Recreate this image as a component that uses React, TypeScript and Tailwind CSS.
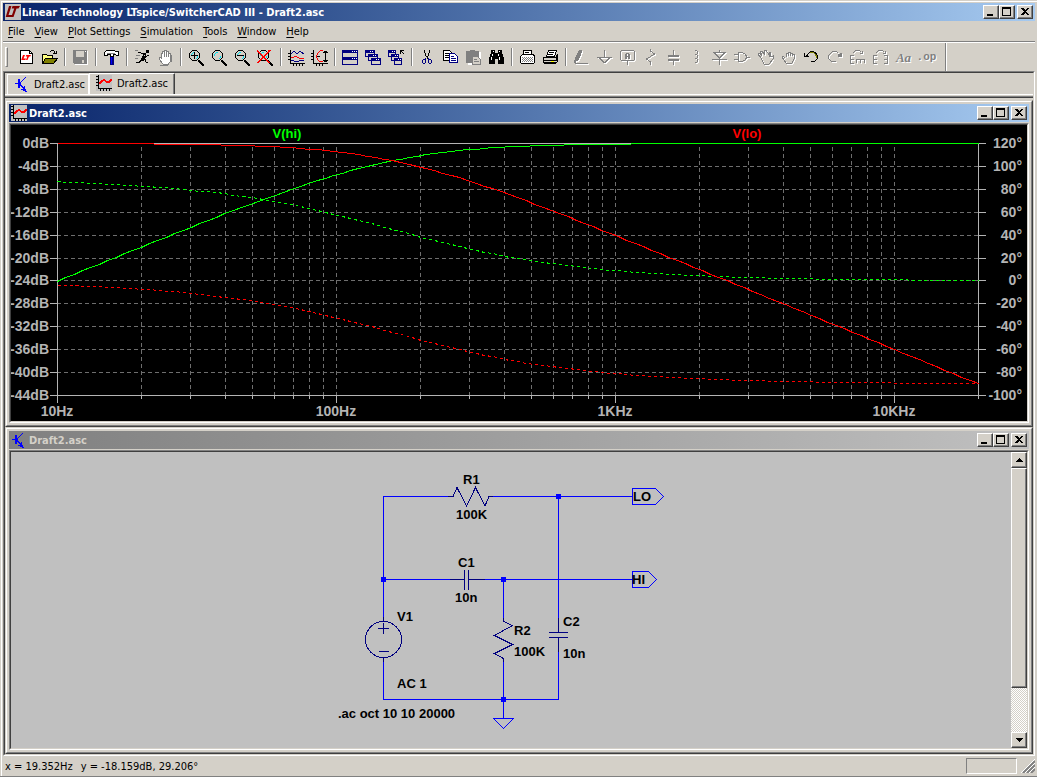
import React from "react";

type Kids = { children?: React.ReactNode };

const raised =
  "border border-t-white border-l-white border-r-[#404040] border-b-[#404040] bg-[#d4d0c8] shadow-[inset_-1px_-1px_0_#808080]";

/* ---------- icon helpers ---------- */

function Icon({ children }: Kids) {
  return (
    <svg className="shrink-0" width="17" height="17" viewBox="0 0 17 17" fill="none" stroke="currentColor" strokeWidth="1" shapeRendering="crispEdges" aria-hidden="true">
      {children}
    </svg>
  );
}

function Etched({ children }: Kids) {
  return (
    <Icon>
      <g transform="translate(1 1)" className="text-white">{children}</g>
      <g className="text-[#808080]">{children}</g>
    </Icon>
  );
}

function Lens({ children }: Kids) {
  return (
    <Icon>
      <path d="M4 1.5h5M3 2.5h1M9 2.5h1M2 3.5h1M10 3.5h1M1.5 4v5M11.5 4v5M2 9.5h1M10 9.5h1M3 10.5h1M9 10.5h1M4 11.5h5" stroke="#000" />
      <path d="M3.5 5v2M4 4.5h1M5 3.500h2M8 9.5h1M9.500 7v2" stroke="#00e0f0" />
      <path d="M10 11h2v1h1v1h1v1h1v1h1v2h-2v-1h-1v-1h-1v-1h-1v-1h-1z" fill="#000" stroke="none" />
      {children}
    </Icon>
  );
}

function TransistorIcon() {
  return (
    <Icon>
      <path d="M1 7h3V3h2v3h1V5h1V4h1V3h1V2h1V1h1v1h-1v1h-1v1H9v1H8v1H7v3h1v1h1v1h1v-1h1v3h1v2h1v1h-2v-1H9v-1H7v-1h2v-1H8v-1H7v-1H6v2H4V8H1z" fill="#0000ff" stroke="none" />
    </Icon>
  );
}

function WaveIcon() {
  return (
    <Icon>
      <path d="M0 0h16v16H0z" fill="#c0c0c0" stroke="none" />
      <path d="M2.5 0v14M2 13.500h14" stroke="#000" />
      <path d="M0 1.500h2M0 4.500h2M0 7.500h2M0 10.500h2M4.500 14v2M7.500 14v2M10.500 14v2M13.500 14v2" stroke="#000" />
      <path d="M3 7h1V6h1V5h2V4h2v1h1v1h3V5h1V4h2v2h-1v1h-1v1h-4V7H9V6H7v1H6v1H5v1H3z" fill="#ff0000" stroke="none" />
    </Icon>
  );
}

function AppIcon() {
  return (
    <svg className="shrink-0" width="16" height="16" viewBox="0 0 16 16" aria-hidden="true">
      <path d="M0 0h16v16H0z" fill="#c0c0c0" />
      <path d="M4 2h2.500L3.500 11H7l-.7 2H.7zM7.500 2H15l-1.500 2.500h-2L8.500 13H6.300L9.200 4.500H6.700z" fill="#800000" />
    </svg>
  );
}

const icons: Record<string, React.ReactNode> = {
  New: (
    <Icon>
      <path d="M2.5 1.5h9l3 3v10h-12z" fill="#fff" stroke="#000" />
      <path d="M11.5 1.5v3h3" stroke="#000" />
      <path d="M5 6h2L5.500 9.500H8l-.7 1.500H3.200zM8.300 6H13l-.8 1.500H11L9.500 11H8l1.300-3.500H7.700z" fill="#ff0000" stroke="none" shapeRendering="auto" />
    </Icon>
  ),
  Open: (
    <Icon>
      <path d="M1.5 14.5v-9h4l1 1h5v3" fill="#ffff80" stroke="#000" />
      <path d="M1.5 14.5l3-5h12l-4 5z" fill="#808000" stroke="#000" />
      <path d="M9 2.5h1M10 1.5h3M13.5 2v2M15.5 2v3M12 4.5h4" stroke="#000" />
    </Icon>
  ),
  Save: (
    <Icon>
      <path d="M2 2h14v14H3z" fill="#fff" stroke="none" />
      <path d="M1 1h14v14H2l-1-1z" fill="#808080" stroke="none" />
      <path d="M4 2h8v6H4zM10 11h2v3h-2z" fill="#d4d0c8" stroke="none" />
      <path d="M13 2.5h1" stroke="#fff" />
    </Icon>
  ),
  "Control Panel": (
    <Icon>
      <path d="M3.500 1.500h8l1 1h3v4h-2l-1-1h-2v2h-3v-2h-3v1h-3v-3z" fill="#fff" stroke="#000" />
      <path d="M4 4.500h8" stroke="#808080" />
      <path d="M7 8h4v8H7z" fill="#000080" stroke="none" />
      <path d="M8.500 8v7" stroke="#0000ff" />
    </Icon>
  ),
  Run: (
    <Icon>
      <path d="M12 1h3v3h-3z" fill="#000" stroke="none" />
      <path d="M4 3.500h3M7 4.500h5M9 5h2v3H9zM8 7h2v3H8zM11 7.500h2M13 6.500h2M7 9h2v2H7zM10 10.500h2M11.500 10v3M12 13.500h2M6 11.500h2M5 12.500h2M2 13.500h4" stroke="#000" />
      <path d="M1 1.500h3M2 6.500h4M1 9.500h3" stroke="#808080" />
    </Icon>
  ),
  Halt: (
    <Icon>
      <path d="M4.5 9V4h1V2h2V1h2v1h2v2h2v8l-2 3H6l-4-5V8h1z" fill="#fff" stroke="#808080" />
      <path d="M7.5 3v5M9.5 3v5M11.5 4v4M3 16.5h8M14.500 6v7" stroke="#808080" />
    </Icon>
  ),
  "Zoom In": <Lens><path d="M3 6.500h7M6.500 3v7" stroke="#000" /></Lens>,
  "Zoom Back": <Lens />,
  "Zoom Out": <Lens><path d="M3 6.500h7" stroke="#000" /></Lens>,
  "Zoom Extents": <Lens><path d="M0 1l12 13M13 1L1 14" stroke="#ff0000" strokeWidth="1.500" /></Lens>,
  "Add Trace": (
    <Icon>
      <path d="M2.5 1v14M2 14.5h15M0 4.500h2M0 7.500h2M0 10.500h2M5.500 15v2M8.500 15v2M11.500 15v2M14.500 15v2" stroke="#000" />
      <path d="M3 5l3-3 3 3 3-3 4 3M3 11.500h3M6 12.500h5M11 11.500h5" stroke="#000080" />
      <path d="M3 8.500h3M6 7.500h3M9 8.500h2M11 9.500h5" stroke="#ff0000" />
    </Icon>
  ),
  Autorange: (
    <Icon>
      <path d="M2.5 1v14M2 14.500h15M0 4.500h2M0 7.500h2M0 10.500h2M5.500 15v2M8.500 15v2M11.500 15v2M14.500 2v11M6 7.500h3" stroke="#000" />
      <path d="M12 3.500h5M12 11.500h5M13 2.500h3M13 12.500h3" stroke="#000" />
      <path d="M12 1.500H9M8 2.500h1M7 3.500h1M6.500 4v2M5.500 6v3M6.500 9v2M7 11.500h1M8 12.500h4" stroke="#ff0000" />
    </Icon>
  ),
  Tile: (
    <Icon>
      <path d="M.5 1.500h15v7H.5zM.5 8.500h15v7H.5z" fill="#d4d0c8" stroke="#000080" />
      <path d="M0 1h16v3H0zM0 8h16v3H0z" fill="#000080" stroke="none" />
      <path d="M10 2.500h1M12 2.500h1M14 2.500h1M10 9.500h1M12 9.500h1M14 9.500h1" stroke="#fff" />
    </Icon>
  ),
  Cascade: (
    <Icon>
      {[[0, 1], [3, 5], [6, 9]].map(([x, y]) => (
        <g key={x}>
          <path d={`M${x + 0.5} ${y + 0.5}h9v6h-9z`} fill="#d4d0c8" stroke="#000080" />
          <path d={`M${x} ${y}h10v3h-10z`} fill="#000080" stroke="none" />
          <path d={`M${x + 5} ${y + 1.5}h1m1 0h1`} stroke="#fff" />
        </g>
      ))}
    </Icon>
  ),
  "Close All": (
    <Icon>
      {[[0, 1], [3, 5], [6, 9]].map(([x, y]) => (
        <g key={x}>
          <path d={`M${x + 0.5} ${y + 0.5}h7v6h-7z`} fill="#d4d0c8" stroke="#000080" />
          <path d={`M${x} ${y}h8v3h-8z`} fill="#000080" stroke="none" />
          <path d={`M${x + 4} ${y + 1.5}h1m1 0h1`} stroke="#fff" />
        </g>
      ))}
      <path d="M12 1.500h4M12.500 1v4M13 2.500h1M14 3.500h1M15 4.500h1" stroke="#000" />
    </Icon>
  ),
  Cut: (
    <Icon>
      <path d="M5.500 1v3M6.500 4v3M10.500 1v3M9.500 4v3M7 7.500h2M8 7v3" stroke="#000" />
      <path d="M6 9.500h1M9 9.500h1M4 10.500h2M10 10.500h2M3.500 11v3M6.500 10v4M4 14.500h2M9.500 10v4M12.500 11v3M10 14.500h2" stroke="#000080" />
    </Icon>
  ),
  Copy: (
    <Icon>
      <path d="M1.500 1.500h6l2 2v8h-8z" fill="#fff" stroke="#000" />
      <path d="M3 4.500h4M3 6.500h4M3 8.500h4" stroke="#000" />
      <path d="M7.500 4.500h5l3 3v6h-8z" fill="#fff" stroke="#000080" />
      <path d="M9 7.500h3M9 9.500h5M9 11.500h5" stroke="#000080" />
    </Icon>
  ),
  Paste: (
    <Icon>
      <path d="M2 3h14v13H3z" fill="#fff" stroke="none" />
      <path d="M1 2h4V1h5v1h4v12H1z" fill="#808080" stroke="none" />
      <path d="M7.500 7.500h5l3 3v5h-8z" fill="#d4d0c8" stroke="#808080" />
      <path d="M9 10.500h3M9 12.500h5" stroke="#808080" />
    </Icon>
  ),
  Find: (
    <Icon>
      <path d="M3 1h4v3h3V1h4v3l2 5v6h-6v-5H7v5H1V9l2-5z" fill="#000" stroke="none" />
      <path d="M4.500 5v2M3.500 8v3M10.500 5v2M11.500 8v3M5 2.500h1M11 2.500h1" stroke="#fff" />
    </Icon>
  ),
  "Print Preview": (
    <Icon>
      <path d="M4.500 5.500v-4h8v4h2l1 2v6l-1 1h-12l-1-1v-6l2-2z" fill="#fff" stroke="#000" />
      <path d="M3 8.500h11M3 10.500h11M3 12.500h11" stroke="#808080" strokeDasharray="1 1" />
      <path d="M3 9.500h11M3 11.500h11" stroke="#808080" strokeDasharray="1 1" strokeDashoffset="1" />
      <path d="M6 3.500h4M4 5.500h9" stroke="#000" />
    </Icon>
  ),
  Print: (
    <Icon>
      <path d="M4.500 7.500l2-6h8l-2 6z" fill="#fff" stroke="#000" />
      <path d="M7 3.500h5M6 5.500h5" stroke="#000" />
      <path d="M1.500 8.500h12l2-3v7l-2 2h-11l-1-1z" fill="#d4d0c8" stroke="#000" />
      <path d="M2 11.500h12M2 13.500h12M14.500 7v5M2 8.500h12" stroke="#000" />
      <path d="M9 12.500h3" stroke="#ffff00" />
    </Icon>
  ),
  Wire: (
    <Etched>
      <path d="M6 1h3v3H8v3H7v2H6v2H5v1H3v2H1v-3h1V8h1V6h1V4h1V2h1z" fill="currentColor" stroke="none" />
      <path d="M2 14.500h13" />
    </Etched>
  ),
  Ground: <Etched><path d="M8.500 1v7M1 8.500h15M3 9.500h2M4 10.500h2M5 11.500h2M6 12.500h2M7 13.500h3M9 12.500h2M10 11.500h2M11 10.500h2M12 9.500h2" /></Etched>,
  "Label Net": (
    <Etched>
      <path d="M2 1.500h13M1.500 2v9M15.500 2v9M2 11.500h13M8.500 12v4" />
      <path d="M6 10V5h1V4h3v1h1v5H9V8H8v2zM8 5v2h1V5z" fill="currentColor" fillRule="evenodd" stroke="none" />
    </Etched>
  ),
  Resistor: <Etched><path d="M8.500 0v2l4 3-8 5 4 3v3" /></Etched>,
  Capacitor: <Etched><path d="M8.500 1v5M8.500 11v5" /><path d="M3 7h11M3 11h11" strokeWidth="2" /></Etched>,
  Inductor: <Etched><path d="M7 1.500h2M9.500 2v3M7 5.500h2M9.500 6v3M7 9.500h2M9.500 10v3M7 13.500h2" /></Etched>,
  Diode: <Etched><path d="M8.500 1v3M2 3.500h13M3 4.500h2M4 5.500h2M5 6.500h2M6 7.500h2M7 8.500h3M9 7.500h2M10 6.500h2M11 5.500h2M12 4.500h2M1 10.500h15M8.500 9v7" /></Etched>,
  Component: <Etched><path d="M4.500 3v10M4 3.500h5M4 12.500h5M9 4.500h2M9 11.500h2M11.500 5v2M11.500 9v2M12.500 6v4M0 5.500h4M0 10.500h4M13 8h3" /></Etched>,
  Move: <Etched><path d="M4 9L1 5l1-1 3 3-2-5h2l3 4-1-5h2l3 5V3h1l1 5 2-1v3l-4 5H7z" /></Etched>,
  Drag: <Etched><path d="M5 9L3 7 2 8l4 6h6l2-4V5h-2V4h-2V3H8v1H6v4M8.500 4v3M10.500 4v3M12.500 5v2" /></Etched>,
  Undo: (
    <Icon>
      <path d="M1 4h1v3h1V6h1V5h1V4h1V3h1v1H6v1H5v2h1v1H1z" fill="#000" stroke="none" />
      <path d="M11 3.500h1M12 4.500h1M13.500 5v1M14.500 6v4M13.500 10v1M12.500 11v1M8 12.500h4" stroke="#000" />
      <path d="M7 2.500h4M12 3.500h1M13 4.500h1" stroke="#000" />
      <path d="M7 3.500h4M11 4.500h1M12.500 5v2M13.500 6v3" stroke="#808000" />
    </Icon>
  ),
  Redo: <Etched><path d="M15 4h-1v3h-2v1h4V4zM12 5h2v2h-2z" fill="currentColor" stroke="none" /><path d="M6 2.500h5M5 3.500h1M4 4.500h1M3 5.500h1M2.500 6v4M3.500 10v1M4 11.500h1M5 12.500h5M11 3.500h1" /></Etched>,
  Rotate: <Etched><path d="M1.500 6v9M2 6.500h3M2 10.500h3M2 14.500h3M7 10.500h9M7.500 11v3M11.500 11v3M15.500 11v3M4 3.500h1M5 2.500h1M6 1.500h5M11 2.500h1M13.500 2v3M11 4.500h3" /></Etched>,
  Mirror: <Etched><path d="M1.500 6v9M2 6.500h3M2 10.500h3M2 14.500h3M15.500 6v9M12 6.500h3M12 10.500h3M12 14.500h3M4 3.500h1M5 2.500h1M6 1.500h5M11 2.500h1M13.500 2v3M11 4.500h3" /></Etched>,
};

function LetterIcon({ text, italic }: { text: string; italic?: boolean }) {
  return (
    <span
      className={
        "text-[#808080] [text-shadow:1px_1px_0_white] leading-none " +
        (italic ? "font-['Liberation_Serif',serif] italic font-bold text-[13px]" : "font-['Liberation_Mono',monospace] font-bold text-[11px]")
      }
    >
      {text}
    </span>
  );
}

const toolbar: string[][] = [
  ["New", "Open"],
  ["Save"],
  ["Control Panel"],
  ["Run", "Halt"],
  ["Zoom In", "Zoom Back", "Zoom Out", "Zoom Extents"],
  ["Add Trace", "Autorange"],
  ["Tile", "Cascade", "Close All"],
  ["Cut", "Copy", "Paste", "Find"],
  ["Print Preview", "Print"],
  ["Wire", "Ground", "Label Net", "Resistor", "Capacitor", "Inductor", "Diode", "Component", "Move", "Drag", "Undo", "Redo", "Rotate", "Mirror", "Text", "SPICE Directive"],
];

function Toolbar() {
  return (
    <div className="flex h-[29px] shrink-0 items-center border-t border-white pl-[2px]">
      <div className="h-[20px] w-[3px] border border-l-white border-t-white border-r-[#808080] border-b-[#808080]" />
      <div className="flex h-full items-center pl-[7px]">
        {toolbar.map((group, i) => (
          <React.Fragment key={i}>
            {i > 0 && (
              <div className="flex w-2 justify-center">
                <div className="h-[18px] w-[2px] border-l border-l-[#808080] bg-white" />
              </div>
            )}
            {group.map((name) => (
              <button key={name} type="button" aria-label={name} className="flex h-[22px] w-[23px] items-center justify-center">
                {name === "Text" ? <LetterIcon text="Aa" italic /> : name === "SPICE Directive" ? <LetterIcon text=".op" /> : icons[name]}
              </button>
            ))}
          </React.Fragment>
        ))}
      </div>
      <div className="ml-[7px] h-full w-[2px] border-l border-l-[#808080] bg-white" />
    </div>
  );
}

/* ---------- window chrome ---------- */

function CaptionButtons() {
  const box = `flex h-[14px] w-[16px] items-center justify-center ${raised}`;
  return (
    <div className="flex pr-[2px]">
      <button type="button" aria-label="Minimize" className={box}>
        <svg width="12" height="10" shapeRendering="crispEdges"><path d="M2 7h6v2H2z" /></svg>
      </button>
      <button type="button" aria-label="Maximize" className={box}>
        <svg width="12" height="10" shapeRendering="crispEdges"><path d="M1 0h9v9H1zM2 2v6h7V2z" fillRule="evenodd" /></svg>
      </button>
      <button type="button" aria-label="Close" className={`${box} ml-[2px]`}>
        <svg width="12" height="10" shapeRendering="crispEdges"><path d="M2 1h2l2 2 2-2h2L7 4.500 10 8H8L6 6 4 8H2l3-3.500z" /></svg>
      </button>
    </div>
  );
}

function TitleBar({ icon, title, active = true }: { icon: React.ReactNode; title: string; active?: boolean }) {
  return (
    <div
      className={
        "flex h-[18px] shrink-0 items-center gap-px pl-[2px] font-bold " +
        (active ? "bg-linear-to-r from-[#0a246a] to-[#a6caf0] text-white" : "bg-linear-to-r from-[#808080] to-[#c0c0c0] text-[#d4d0c8]")
      }
    >
      {icon}
      <span className="min-w-0 flex-1 truncate">{title}</span>
      <CaptionButtons />
    </div>
  );
}

function ChildWindow({ icon, title, active, children }: Kids & { icon: React.ReactNode; title: string; active?: boolean }) {
  return (
    <section className="flex min-h-0 min-w-0 flex-1 flex-col border border-t-[#d4d0c8] border-l-[#d4d0c8] border-r-[#404040] border-b-[#404040]">
      <div className="flex min-h-0 flex-1 flex-col border border-t-white border-l-white border-r-[#808080] border-b-[#808080] p-[2px]">
        <TitleBar icon={icon} title={title} active={active} />
        <div className="mt-px flex min-h-0 min-w-0 flex-1 border border-t-[#808080] border-l-[#808080] border-r-white border-b-white">
          <div className="flex min-h-0 min-w-0 flex-1 border border-t-[#404040] border-l-[#404040] border-r-[#d4d0c8] border-b-[#d4d0c8]">{children}</div>
        </div>
      </div>
    </section>
  );
}

/* ---------- waveform plot ---------- */

const LEFT = 57;
const RIGHT = 978;
const TOP = 143;
const BOTTOM = 395;
const DECADE = 279;
const CORNER = 1 / (2 * Math.PI * 100e3 * 10e-9);

const xOf = (f: number) => LEFT + DECADE * Math.log10(f / 10);
const yOfDb = (db: number) => TOP - (db * (BOTTOM - TOP)) / 44;
const yOfDeg = (deg: number) => TOP + ((120 - deg) * (BOTTOM - TOP)) / 220;

function trace(fn: (f: number) => number) {
  const points: string[] = [];
  for (let i = 0; i <= 110; i++) {
    const f = 10 * Math.pow(2000, i / 110);
    points.push(`${Math.round(xOf(f)) + 0.5},${Math.round(fn(f)) + 0.5}`);
  }
  return points.join(" ");
}

const loDb = trace((f) => yOfDb(-10 * Math.log10(1 + (f / CORNER) ** 2)));
const hiDb = trace((f) => yOfDb(-10 * Math.log10(1 + (CORNER / f) ** 2)));
const loDeg = trace((f) => yOfDeg((-Math.atan(f / CORNER) * 180) / Math.PI));
const hiDeg = trace((f) => yOfDeg((Math.atan(CORNER / f) * 180) / Math.PI));

const freqs = [10, 100, 1000, 10000]
  .flatMap((d) => [1, 2, 3, 4, 5, 6, 7, 8, 9].map((m) => d * m))
  .filter((f) => f < 20000);

function Plot() {
  return (
    <div className="min-w-0 flex-1 overflow-hidden bg-black">
      <svg className="block h-full w-full font-['Liberation_Sans',Arial,sans-serif] text-[14px] font-bold" viewBox="11 125 1016 296" role="img" aria-label="Frequency response plot">
        <g shapeRendering="crispEdges" fill="none" strokeWidth="1">
          <g stroke="#6e6e6e" strokeDasharray="4 3">
            {freqs.slice(1).map((f) => (
              <path key={f} d={`M${Math.round(xOf(f)) + 0.5} ${TOP + 4}V${BOTTOM}`} />
            ))}
            {Array.from({ length: 10 }, (_, i) => (
              <path key={i} d={`M${LEFT} ${Math.round(yOfDb(-4 * (i + 1))) + 0.5}H${RIGHT}`} />
            ))}
          </g>
          <g stroke="#b4b4b4">
            <path d={`M${LEFT + 0.5} ${TOP}V${BOTTOM}M${LEFT} ${TOP + 0.5}H${RIGHT}M${RIGHT + 0.5} ${TOP}V${BOTTOM + 4}M${LEFT} ${BOTTOM + 0.5}H${RIGHT}`} />
            {Array.from({ length: 12 }, (_, i) => {
              const y = Math.round(yOfDb(-4 * i)) + 0.5;
              return <path key={i} d={`M50 ${y}h7M${RIGHT} ${y}h8`} />;
            })}
            {freqs.map((f) => (
              <path key={f} d={`M${Math.round(xOf(f)) + 0.5} ${BOTTOM}v${Number.isInteger(Math.log10(f)) ? 8 : 4}`} />
            ))}
          </g>
          <polyline points={hiDb} stroke="#00ff00" />
          <polyline points={hiDeg} stroke="#00ff00" strokeDasharray="3 3" />
          <polyline points={loDb} stroke="#ff0000" />
          <polyline points={loDeg} stroke="#ff0000" strokeDasharray="3 3" />
        </g>
        <g textAnchor="middle" className="text-[13px]">
          <text x="287" y="138" fill="#00ff00">V(hi)</text>
          <text x="747" y="138" fill="#ff0000">V(lo)</text>
        </g>
        <g fill="#b4b4b4">
          {Array.from({ length: 12 }, (_, i) => (
            <text key={i} x="49" y={Math.round(yOfDb(-4 * i)) + 5} textAnchor="end">{`${-4 * i || 0}dB`}</text>
          ))}
          {Array.from({ length: 12 }, (_, i) => (
            <text key={i} x="1022" y={Math.round(yOfDb(-4 * i)) + 5} textAnchor="end">{`${120 - 20 * i}°`}</text>
          ))}
          {["10Hz", "100Hz", "1KHz", "10KHz"].map((label, i) => (
            <text key={label} x={LEFT + DECADE * i} y="416" textAnchor="middle">{label}</text>
          ))}
        </g>
      </svg>
    </div>
  );
}

/* ---------- schematic ---------- */

const notes: [number, number, string][] = [
  [463, 484, "R1"],
  [456, 519, "100K"],
  [458, 567, "C1"],
  [455, 602, "10n"],
  [397, 621, "V1"],
  [397, 688, "AC 1"],
  [514, 635, "R2"],
  [514, 656, "100K"],
  [563, 626, "C2"],
  [563, 658, "10n"],
  [633, 501, "LO"],
  [632, 584, "HI"],
  [338, 718, ".ac oct 10 10 20000"],
];

function Schematic() {
  return (
    <div className="min-w-0 flex-1 overflow-hidden bg-[#c0c0c0]">
      <svg className="block h-full w-full font-['Liberation_Sans',Arial,sans-serif] text-[13px] font-bold" viewBox="11 452 1000 296" role="img" aria-label="RC filter schematic">
        <g shapeRendering="crispEdges" fill="none" strokeWidth="1">
          <g stroke="#0000ff">
            <path d="M453 496.500H383.500V617M489 496.500H632M383 579.500H450M485 579.500H632M503.500 579V618M503.500 662V718M558.500 496V618M558.500 652V699.500H383.500V662" />
            <path d="M632.500 488.500H655.500L663.500 496.500 655.500 504.500H632.500zM632.500 571.500H648.500L656.500 579.500 648.500 587.500H632.500z" />
            <path d="M493.500 718.500H513.500L503.500 728.500z" />
          </g>
          <g stroke="#000080">
            <path d="M448 496.500H453L457 487.500 466.500 506 475.500 487.500 485 506 489 496.500H493" />
            <path d="M450 579.500H464.500M464.500 570V590M468.500 570V590M468.500 579.500H485" />
            <path d="M503.500 618V621.500L512.500 625.500 494.500 635.500 512.500 644.500 494.500 653.500 503.500 658.500V662" />
            <path d="M558.500 618V632.500M549 632.500H568M549 637.500H568M558.500 637V652" />
            <path d="M383.500 617V621M383.500 657V662M378 628.500H389M383.500 623V634M379 651.500H389" />
            <circle cx="383.500" cy="639.500" r="18" />
          </g>
        </g>
        <g fill="#0000ff" shapeRendering="crispEdges">
          <path d="M556 494h5v5h-5zM381 577h5v5h-5zM501 577h5v5h-5zM501 697h5v5h-5z" />
        </g>
        {notes.map(([x, y, text]) => (
          <text key={`${x}-${y}`} x={x} y={y}>{text}</text>
        ))}
      </svg>
    </div>
  );
}

function ScrollBar() {
  const arrow = `flex h-4 w-4 shrink-0 items-center justify-center ${raised}`;
  return (
    <div className="flex w-4 shrink-0 flex-col bg-[repeating-conic-gradient(#d4d0c8_0_25%,#ffffff_0_50%)] bg-[length:2px_2px]">
      <button type="button" aria-label="Scroll up" className={arrow}>
        <svg width="7" height="4" shapeRendering="crispEdges"><path d="M3 0h1v1h1v1h1v1h1v1H0V3h1V2h1V1h1z" /></svg>
      </button>
      <div className={`grow-[220] ${raised}`} />
      <div className="grow-[44]" />
      <button type="button" aria-label="Scroll down" className={arrow}>
        <svg width="7" height="4" shapeRendering="crispEdges"><path d="M0 0h7v1H6v1H5v1H4v1H3V3H2V2H1V1H0z" /></svg>
      </button>
    </div>
  );
}

/* ---------- application ---------- */

const menus = ["File", "View", "Plot Settings", "Simulation", "Tools", "Window", "Help"];

export default function App() {
  return (
    <div className="flex h-screen min-h-[400px] flex-col border-b border-[#808080] bg-[#d4d0c8] font-['DejaVu_Sans_Condensed','DejaVu_Sans',sans-serif] text-[11px] leading-[15px] text-black">
      <div className="flex min-h-0 flex-1 flex-col border-t border-[#d4d0c8]">
        <div className="ml-px flex min-h-0 flex-1 flex-col border-t border-l border-white pt-px pr-[2px] pl-px">
          <TitleBar icon={<AppIcon />} title="Linear Technology LTspice/SwitcherCAD III - Draft2.asc" />
          <nav className="flex h-[21px] shrink-0 items-center border-b border-[#808080]">
            {menus.map((m) => (
              <button key={m} type="button" className="px-[5px]">
                <span className="underline underline-offset-2">{m[0]}</span>
                {m.slice(1)}
              </button>
            ))}
          </nav>
          <Toolbar />
          <main className="flex min-h-0 flex-1 flex-col border border-t-[#808080] border-l-[#808080] border-r-white border-b-white">
            <div className="flex min-h-0 flex-1 flex-col border border-t-[#404040] border-l-[#404040] border-r-[#d4d0c8] border-b-[#d4d0c8]">
              <div className="flex h-[22px] shrink-0 items-end border-b border-white pl-[2px]" role="tablist">
                <button type="button" role="tab" aria-selected="false" className="flex h-[20px] w-[82px] items-center gap-[3px] border border-b-0 border-white pl-[6px]">
                  <TransistorIcon />
                  Draft2.asc
                </button>
                <button type="button" role="tab" aria-selected="true" className="flex h-[21px] w-[86px] items-center gap-[4px] border-t border-r border-l border-white border-r-[#404040] pb-px pl-[6px] shadow-[inset_-1px_0_0_#808080]">
                  <WaveIcon />
                  Draft2.asc
                </button>
              </div>
              <div className="mt-px h-[2px] shrink-0 border-t border-[#808080] bg-[#404040]" />
              <div className="flex min-h-0 flex-1 flex-col pt-[2px]">
                <ChildWindow icon={<WaveIcon />} title="Draft2.asc" active>
                  <Plot />
                </ChildWindow>
                <ChildWindow icon={<TransistorIcon />} title="Draft2.asc" active={false}>
                  <Schematic />
                  <ScrollBar />
                </ChildWindow>
              </div>
            </div>
          </main>
          <footer className="flex h-[20px] shrink-0 items-center pl-[2px]">
            <span>x = 19.352Hz</span>
            <span className="flex-1 pl-2">y = -18.159dB, 29.206°</span>
            <div className="h-[16px] w-[51px] border border-t-[#808080] border-l-[#808080] border-r-white border-b-white" />
            <svg className="ml-[4px]" width="14" height="14" viewBox="0 0 14 14" stroke="#808080" strokeWidth="2" aria-hidden="true">
              <path d="M2 14L14 2M6 14l8-8M10 14l4-4" />
              <path d="M0 14L14 0M4 14L14 4M8 14l6-6" stroke="#fff" strokeWidth="1" />
            </svg>
          </footer>
        </div>
      </div>
    </div>
  );
}
